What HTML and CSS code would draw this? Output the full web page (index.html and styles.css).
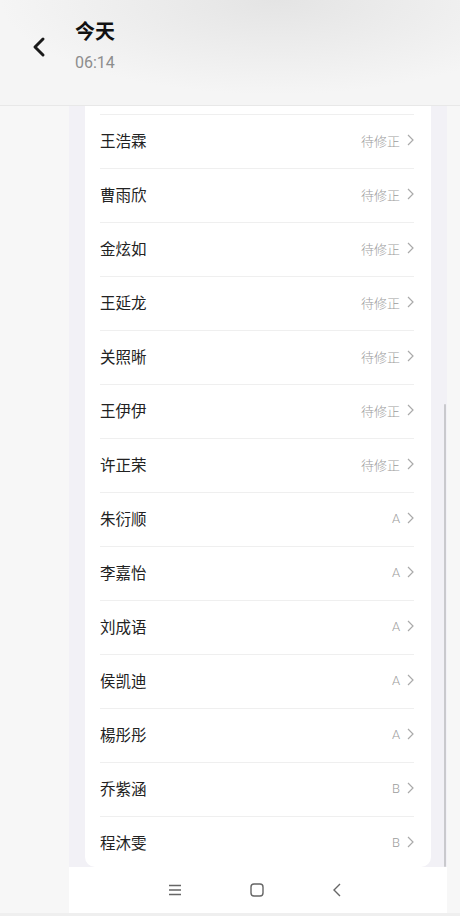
FILE: index.html
```html
<!DOCTYPE html>
<html lang="zh-CN">
<head>
<meta charset="UTF-8">
<meta name="viewport" content="width=device-width, initial-scale=1.0">
<title>今天</title>
<link rel="stylesheet" href="styles.css">
</head>
<body>
<div class="header">
    <svg class="back" width="16" height="22" viewBox="0 0 16 22">
        <path d="M12 3 L4 11 L12 19" fill="none" stroke="#1a1a1a" stroke-width="3" stroke-linecap="round" stroke-linejoin="round"/>
    </svg>
    <div class="title-box">
        <div class="title">今天</div>
        <div class="time">06:14</div>
    </div>
</div>
<div class="column">
    <div class="card">
        <div class="top-gap"></div>
        <div class="list"></div>
    </div>
    <div class="scrollbar"></div>
    <div class="nav">
        <svg width="14" height="12" viewBox="0 0 14 12">
            <path d="M1 1.5 H13 M1 6 H13 M1 10.5 H13" stroke="#666" stroke-width="1.4"/>
        </svg>
        <svg width="14" height="14" viewBox="0 0 14 14">
            <rect x="1" y="1" width="12" height="12" rx="3" fill="none" stroke="#666" stroke-width="1.4"/>
        </svg>
        <svg width="10" height="14" viewBox="0 0 10 14">
            <path d="M8 1 L2 7 L8 13" fill="none" stroke="#666" stroke-width="1.4"/>
        </svg>
    </div>
</div>
<div class="bottom"></div>

<script>
    const list = document.querySelector('.list');
    const students = [
        ['王浩霖', '待修正'], ['曹雨欣', '待修正'], ['金炫如', '待修正'],
        ['王延龙', '待修正'], ['关照晰', '待修正'], ['王伊伊', '待修正'],
        ['许正荣', '待修正'], ['朱衍顺', 'A'], ['李嘉怡', 'A'],
        ['刘成语', 'A'], ['侯凯迪', 'A'], ['楊彤彤', 'A'],
        ['乔紫涵', 'B'], ['程沐雯', 'B']
    ];

    students.forEach(([name, grade]) => {
        const row = document.createElement('div');
        row.classList.add('row');
        row.innerHTML = `<span class="name">${name}</span>
            <span class="grade">${grade}
                <svg width="7" height="12" viewBox="0 0 7 12"><path d="M1 1 L6 6 L1 11" fill="none" stroke="#aaa" stroke-width="1.2"/></svg>
            </span>`;
        list.appendChild(row);
    });
</script>
</body>
</html>
```

FILE: styles.css
```css
body {
    margin: 0;
    width: 460px;
    height: 916px;
    overflow: hidden;
    background-color: #f7f7f7;
    font-family: "Noto Sans CJK SC", "Noto Sans", sans-serif;
    position: relative;
}
.header {
    height: 105px;
    border-bottom: 1px solid #e8e8e8;
    background: radial-gradient(ellipse 60% 90% at 60% 0%, #e4e4e4, rgba(240, 240, 240, 0) 100%), #f5f5f5;
    display: flex;
    align-items: flex-start;
}
.back {
    margin: 36px 0 0 31px;
}
.title-box {
    margin: 16px 0 0 28px;
}
.title {
    font-size: 20px;
    font-weight: bold;
    color: #111;
    line-height: 30px;
}
.time {
    font-family: Roboto, "Noto Sans", sans-serif;
    font-size: 16px;
    color: #8d8d8d;
    line-height: 24px;
    margin-top: 5px;
}
.column {
    margin-left: 69px;
    width: 378px;
    background-color: #f2f1f6;
    position: relative;
}
.card {
    margin-left: 16px;
    width: 346px;
    height: 761px;
    background-color: #fff;
    border-radius: 0 0 10px 10px;
    overflow: hidden;
}
.top-gap {
    height: 8px;
}
.row {
    margin: 0 17px 0 15px;
    height: 54px;
    padding-bottom: 3px;
    border-top: 1px solid #efefef;
    box-sizing: border-box;
    display: flex;
    align-items: center;
    justify-content: space-between;
}
.name {
    font-size: 15.5px;
    color: #222;
}
.grade {
    font-size: 13px;
    color: #9c9c9c;
    display: flex;
    align-items: center;
    gap: 7px;
    font-family: Roboto, "Noto Sans CJK SC", sans-serif;
    font-weight: 300;
}
.scrollbar {
    position: absolute;
    left: 375px;
    top: 298px;
    width: 2px;
    height: 463px;
    background-color: #c9c9cd;
    border-radius: 1px;
}
.nav {
    height: 46px;
    background-color: #fff;
    display: flex;
    align-items: center;
    justify-content: center;
    gap: 68px;
    padding-right: 6px;
}
.bottom {
    height: 4px;
    background-color: #efefef;
}
```
